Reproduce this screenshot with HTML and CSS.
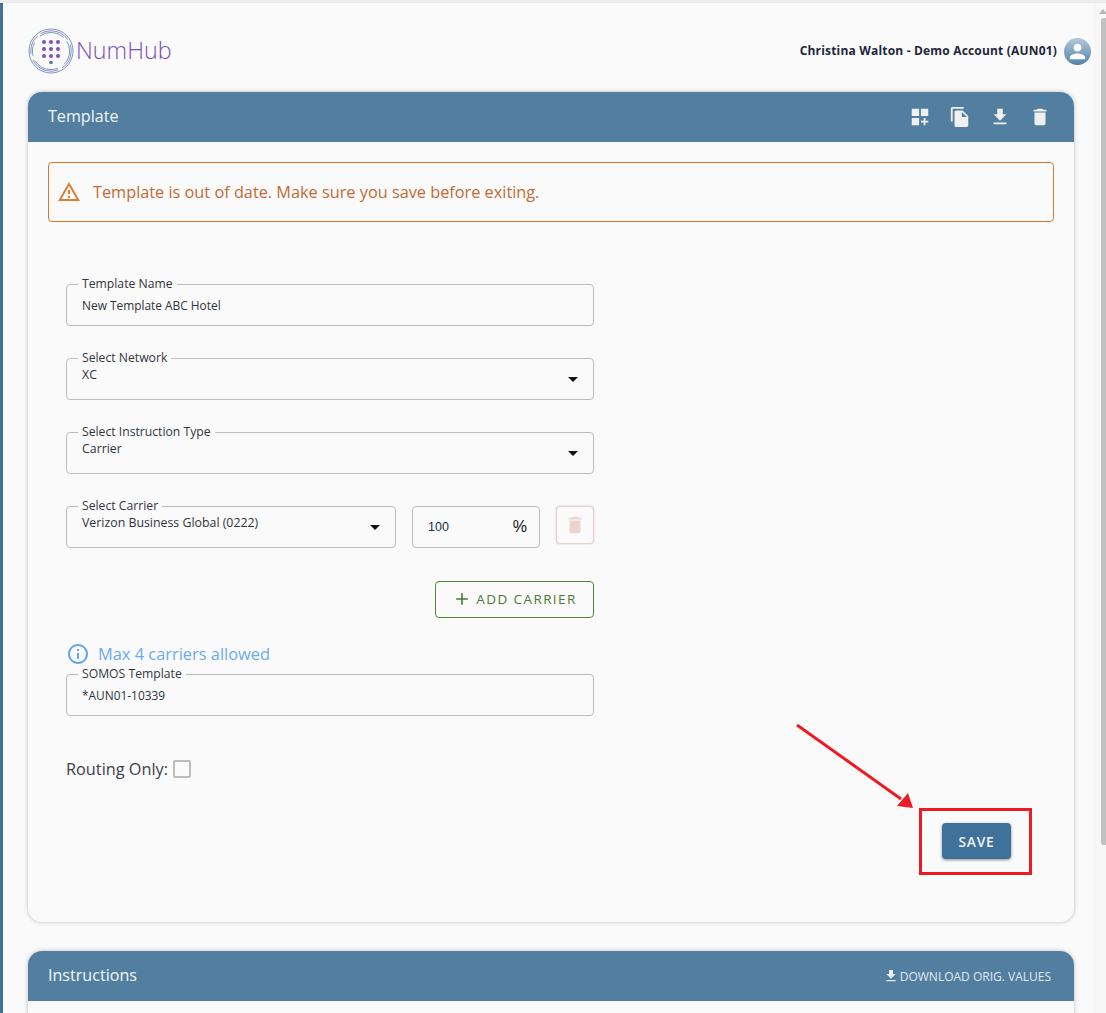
FILE: index.html
```html
<!DOCTYPE html>
<html lang="en">
<head>
<meta charset="utf-8">
<title>Template</title>
<link rel="stylesheet" href="styles.css">
</head>
<body>
<div class="top-line"></div>
<div class="app">
  <div class="side"></div>
  <main class="main">
    <header class="topbar">
      <div class="brand">
        <svg class="logo" viewBox="0 0 46 46" width="46" height="46">
          <g fill="none" stroke-width="0.8">
            <circle cx="23" cy="23" r="22" stroke="#4f86a8"/>
            <circle cx="23" cy="23" r="20.2" stroke="#8a63c0" stroke-dasharray="20 4 30 6"/>
            <circle cx="23" cy="23" r="18.6" stroke="#4f86a8" stroke-dasharray="14 8 26 5"/>
          </g>
          <g fill="#7e4fb8">
            <circle cx="16" cy="14" r="2"/><circle cx="23" cy="14" r="2"/><circle cx="30" cy="14" r="2"/>
            <circle cx="16" cy="21" r="2"/><circle cx="23" cy="21" r="2"/><circle cx="30" cy="21" r="2"/>
            <circle cx="16" cy="28" r="2"/><circle cx="23" cy="28" r="2"/><circle cx="30" cy="28" r="2"/>
          </g>
          <circle cx="23" cy="34.5" r="1.8" fill="#4f7a98"/>
        </svg>
        <span class="brand-name">NumHub</span>
      </div>
      <div class="user">
        <span class="user-name">Christina Walton - Demo Account (AUN01)</span>
        <span class="avatar">
          <svg viewBox="0 0 24 24" width="23" height="23"><path fill="#fff" d="M12 12c2.21 0 4-1.79 4-4s-1.79-4-4-4-4 1.79-4 4 1.79 4 4 4zm0 2c-2.67 0-8 1.34-8 4v2h16v-2c0-2.66-5.33-4-8-4z"/></svg>
        </span>
      </div>
    </header>

    <section class="card">
      <div class="card-head">
        <h2 class="card-title">Template</h2>
        <div class="head-icons">
          <svg class="head-icon" viewBox="0 0 24 24"><path d="M3 3h8v8H3zm10 0h8v8h-8zM3 13h8v8H3zm15 0h-2v3h-3v2h3v3h2v-3h3v-2h-3z"/></svg>
          <svg class="head-icon" viewBox="0 0 24 24"><path d="M16 1H4c-1.1 0-2 .9-2 2v14h2V3h12V1zm-1 4 6 6v10c0 1.1-.9 2-2 2H7.99C6.89 23 6 22.1 6 21l.01-14c0-1.1.89-2 1.99-2h7zm-1 7h5.5L14 6.5V12z"/></svg>
          <svg class="head-icon" viewBox="0 0 24 24"><path d="M19 9h-4V3H9v6H5l7 7 7-7zM5 18v2h14v-2H5z"/></svg>
          <svg class="head-icon" viewBox="0 0 24 24"><path d="M6 19c0 1.1.9 2 2 2h8c1.1 0 2-.9 2-2V7H6v12zM19 4h-3.5l-1-1h-5l-1 1H5v2h14V4z"/></svg>
        </div>
      </div>
      <div class="card-body">
        <div class="alert">
          <svg class="alert-icon" viewBox="0 0 24 24" width="24" height="24"><path d="M12 5.99 19.53 19H4.47L12 5.99M12 2 1 21h22L12 2zm1 14h-2v2h2v-2zm0-6h-2v4h2v-4z"/></svg>
          <span>Template is out of date. Make sure you save before exiting.</span>
        </div>

        <div class="form">
          <fieldset class="field">
            <legend>Template Name</legend>
            <div class="value">New Template ABC Hotel</div>
          </fieldset>
          <fieldset class="field select">
            <legend>Select Network</legend>
            <div class="value">XC</div>
          </fieldset>
          <fieldset class="field select">
            <legend>Select Instruction Type</legend>
            <div class="value">Carrier</div>
          </fieldset>
          <div class="carrier-row">
            <fieldset class="field select carrier">
              <legend>Select Carrier</legend>
              <div class="value">Verizon Business Global (0222)</div>
            </fieldset>
            <div class="percent"><span class="pct-val">100</span><span class="pct-sign">%</span></div>
            <button class="trash" type="button">
              <svg viewBox="0 0 24 24" width="22" height="22"><path fill="#edd3d0" d="M6 19c0 1.1.9 2 2 2h8c1.1 0 2-.9 2-2V7H6v12zM19 4h-3.5l-1-1h-5l-1 1H5v2h14V4z"/></svg>
            </button>
          </div>
          <div class="add-row">
            <button class="add" type="button">
              <svg viewBox="0 0 24 24" width="20" height="20"><path fill="#4c7a34" d="M19 13h-6v6h-2v-6H5v-2h6V5h2v6h6v2z"/></svg>
              <span>ADD CARRIER</span>
            </button>
          </div>
          <div class="info">
            <svg viewBox="0 0 24 24" width="24" height="24"><path fill="#64a6ee" d="M11 7h2v2h-2zm0 4h2v6h-2zm1-9C6.48 2 2 6.48 2 12s4.48 10 10 10 10-4.48 10-10S17.52 2 12 2zm0 18c-4.41 0-8-3.59-8-8s3.59-8 8-8 8 3.59 8 8-3.59 8-8 8z"/></svg>
            <span class="info-text">Max 4 carriers allowed</span>
          </div>
          <fieldset class="field somos">
            <legend>SOMOS Template</legend>
            <div class="value">*AUN01-10339</div>
          </fieldset>
          <label class="routing">
            <span>Routing Only:</span>
            <span class="check"></span>
          </label>
        </div>

        <div class="save-row">
          <button class="save" type="button">SAVE</button>
        </div>
      </div>
    </section>

    <section class="card card-next">
      <div class="card-head">
        <h2 class="card-title">Instructions</h2>
        <div class="download">
          <svg viewBox="0 0 24 24" width="16" height="16"><path fill="#e6edf3" d="M19 9h-4V3H9v6H5l7 7 7-7zM5 18v2h14v-2H5z"/></svg>
          <span>DOWNLOAD ORIG. VALUES</span>
        </div>
      </div>
      <div class="card-rest"></div>
    </section>
  </main>
  <div class="scrollbar">
    <div class="scroll-up"></div>
    <div class="scroll-thumb"></div>
  </div>
</div>

<svg class="arrow" viewBox="0 0 130 95" width="130" height="95">
  <line x1="1" y1="1" x2="105" y2="75" stroke="#ec1c24" stroke-width="3"/>
  <polygon points="117,84 101,82 112,69" fill="#ec1c24"/>
</svg>
<div class="redbox"></div>
</body>
</html>
```
FILE: styles.css
```css
* { box-sizing: border-box; }
html, body { margin: 0; height: 1013px; overflow: hidden; }
body {
  position: relative;
  background: #fafafa;
  font-family: "Open Sans", "Liberation Sans", sans-serif;
  color: #2f3340;
}
.top-line { height: 3px; background: #eeeeee; border-bottom: 1px solid #e6e6e6; }
.app { display: flex; height: 1010px; }
.side { width: 3px; background: #3f729b; flex: none; }
.main { width: 1091px; flex: none; padding: 0 20px 0 25px; }

.topbar { height: 89px; display: flex; align-items: center; justify-content: space-between; padding-top: 7px; }
.brand { display: flex; align-items: center; }
.logo { display: block; }
.brand-name { font-size: 23.300px; font-weight: 300; color: #7a4fb8; margin: 0 0 2px 2px; line-height: 34px; }
.user { display: flex; align-items: center; gap: 7px; margin-right: -17px; }
.user-name { font-size: 12px; letter-spacing: .18px; font-weight: 700; color: #22263a; margin-bottom: 2px; }
.avatar {
  width: 27px; height: 27px; border-radius: 50%;
  background: linear-gradient(#b5c9da, #4f82a8);
  display: flex; align-items: center; justify-content: center;
}

.card { width: 1046px; background: #fafafa; border-radius: 14px; box-shadow: 0 0 4px rgba(0,0,0,.25); overflow: hidden; }
.card-head { height: 50px; background: #527fa0; display: flex; align-items: center; justify-content: space-between; padding: 0 20px; }
.card-title { margin: 0 0 2px; font-size: 16.100px; font-weight: 500; color: #f4f7f9; }
.head-icons { display: flex; gap: 18px; margin-right: 3px; }
.head-icon { width: 22px; height: 22px; fill: #f0f0f0; display: block; }
.card-body { padding: 20px 20px 63px; }

.alert {
  height: 60px; border: 1px solid #d97a2b; border-radius: 4px;
  display: flex; align-items: center; gap: 12px; padding-left: 8px;
  font-size: 16.300px; color: #c06c35;
}
.alert-icon { fill: #dc7f35; }

.form { width: 528px; margin: 55px 0 0 18px; font-size: 12px; }
.field {
  margin: 0 0 25px; padding: 0 11px; height: 49px; min-width: 0;
  border: 1px solid #bdbdbd; border-radius: 4px; position: relative;
}
.field legend { padding: 0 4px; font-size: 12.200px; line-height: 14px; color: #33363f; }
.value { padding: 7px 4px 0; font-size: 11.900px; line-height: 14px; color: #2f3340; }
.select .value { padding-top: 3px; font-size: 12.350px; }
.select::after {
  content: ""; position: absolute; right: 15px; top: 12px;
  border-left: 5px solid transparent; border-right: 5px solid transparent; border-top: 5px solid #111;
}

.carrier-row { display: flex; align-items: flex-start; margin-bottom: 33px; }
.carrier { width: 330px; margin: 0; flex: none; }
.percent {
  width: 128px; height: 42px; margin: 7px 16px 0; flex: none;
  border: 1px solid #bdbdbd; border-radius: 4px;
  display: flex; align-items: center; justify-content: space-between; padding: 0 12px 0 15px;
  font-family: "Liberation Sans", sans-serif;
}
.pct-val { font-size: 12.500px; color: #20304a; }
.pct-sign { font-size: 16px; color: #111; }
.trash {
  width: 38px; height: 38px; margin-top: 7px; padding: 0; flex: none;
  background: #fafafa; border: 1px solid #e6cfcd; border-radius: 4px;
  box-shadow: 0 0 2px rgba(0,0,0,.2);
  display: flex; align-items: center; justify-content: center;
}
.add-row { display: flex; justify-content: flex-end; margin-bottom: 23px; }
.add {
  width: 159px; height: 37px; padding: 0 0 2px; background: #fafafa;
  border: 1.500px solid #4f8a34; border-radius: 4px;
  display: flex; align-items: center; justify-content: center; gap: 4px;
  font-family: inherit; font-size: 13.500px; letter-spacing: 1.400px; color: #4c7a34;
}
.info { display: flex; align-items: center; gap: 8px; height: 26px; font-size: 16.400px; color: #6aabf0; }
.info-text { margin-bottom: 2px; }
.somos { margin-bottom: 42px; }
.routing { display: flex; align-items: center; gap: 5px; font-size: 16.300px; height: 22px; color: #3a3d48; }
.check { width: 18px; height: 18px; border: 2px solid #bdbdbd; border-radius: 2px; background: #fafafa; }

.save-row { display: flex; justify-content: flex-end; margin: 43px 43px 0 0; }
.save {
  width: 69px; height: 36px; padding: 0; border: 0; border-radius: 4px;
  background: #3f729b; color: #f2f5f8; box-shadow: 0 1px 3px rgba(0,0,0,.45);
  font-family: inherit; font-size: 13.800px; font-weight: 600; letter-spacing: .8px;
}

.card-next { margin-top: 29px; }
.card-rest { height: 60px; }
.download { display: flex; align-items: center; gap: 1px; font-size: 12px; color: #e0e7ed; margin-right: 3px; }

.scrollbar { width: 12px; flex: none; background: #f7f7f7; position: relative; }
.scroll-up {
  margin: 6px 0 0 5px; width: 0; height: 0;
  border-left: 4px solid transparent; border-right: 4px solid transparent; border-bottom: 5px solid #b5b5b5;
}
.scroll-thumb { position: absolute; top: 15px; left: 7px; width: 5px; height: 827px; background: #c1c1c1; border-radius: 3px 0 0 3px; }

.arrow { position: absolute; left: 796px; top: 724px; }
.redbox { position: absolute; left: 919px; top: 808px; width: 113px; height: 67px; border: 3px solid #ec1c24; }
```
